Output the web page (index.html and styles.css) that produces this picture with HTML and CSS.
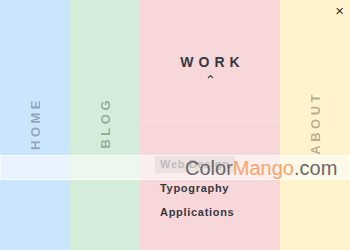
FILE: index.html
```html
<!DOCTYPE html>
<html>
<head>
<meta charset="utf-8">
<link rel="stylesheet" href="styles.css">
</head>
<body>
<div class="menu">
  <div class="col col-home"><span class="vlabel">HOME</span></div>
  <div class="col col-blog"><span class="vlabel">BLOG</span></div>
  <div class="col col-work">
    <div class="work-head">
      <span class="work-title">WORK</span>
      <svg class="caret" width="7" height="5" viewBox="0 0 7 5"><path d="M1 4 L3.5 1.5 L6 4" fill="none" stroke="#444" stroke-width="1.2"/></svg>
    </div>
    <ul class="sub">
      <li><a class="active">Web Design</a></li>
      <li><a>Typography</a></li>
      <li><a>Applications</a></li>
    </ul>
  </div>
  <div class="col col-about"><span class="vlabel">ABOUT</span></div>
</div>
<span class="close">×</span>
<div class="watermark"><span class="wm-text">Color<span class="wm-orange">Mango</span>.com</span></div>
</body>
</html>
```
FILE: styles.css
```css
html, body {
  margin: 0;
  padding: 0;
  width: 350px;
  height: 250px;
  overflow: hidden;
  font-family: "Liberation Sans", Arial, sans-serif;
}
.menu {
  display: flex;
  height: 250px;
}
.col {
  display: flex;
  align-items: center;
  justify-content: center;
  height: 250px;
}
.col-home { width: 70px; background: #cce5ff; }
.col-blog { width: 70px; background: #d4edda; }
.col-about { width: 70px; background: #fff3cd; }
.col-work {
  width: 140px;
  background: #f8d7da;
  flex-direction: column;
  justify-content: flex-start;
  align-items: stretch;
}
.vlabel {
  writing-mode: vertical-rl;
  transform: rotate(180deg);
  font-size: 13px;
  font-weight: bold;
  letter-spacing: 3.5px;
  color: rgba(0, 0, 0, 0.3);
  padding-top: 4px;
}
.work-head {
  height: 122px;
  border-bottom: 1px solid rgba(255, 255, 255, 0.2);
  display: flex;
  flex-direction: column;
  align-items: center;
  justify-content: center;
  padding-top: 12px;
  box-sizing: border-box;
}
.work-title {
  font-size: 14px;
  font-weight: bold;
  letter-spacing: 5px;
  padding-left: 5px;
  color: #343a40;
  line-height: 16px;
}
.caret {
  margin-top: 4px;
  display: block;
}
.sub {
  list-style: none;
  margin: 0;
  padding: 32px 0 0 15px;
}
.sub li {
  height: 24px;
}
.sub a {
  display: inline-block;
  font-size: 11px;
  font-weight: bold;
  letter-spacing: 0.7px;
  color: #343a40;
  padding: 2px 5px;
  line-height: 13px;
}
.sub a.active {
  background: rgba(0, 0, 0, 0.12);
  color: #6c6c6c;
}
.close {
  position: absolute;
  top: 2px;
  right: 6px;
  font-size: 15px;
  color: #333;
}
.watermark {
  position: absolute;
  left: 0;
  top: 155px;
  width: 350px;
  height: 25px;
  box-sizing: border-box;
  background: rgba(255, 255, 255, 0.55);
  border: 1px solid rgba(255, 255, 255, 0.7);
  display: flex;
  align-items: center;
  padding-left: 184px;
}
.wm-text {
  font-size: 20px;
  color: #686868;
  line-height: 22px;
}
.wm-orange {
  color: #f7a56b;
}
```
